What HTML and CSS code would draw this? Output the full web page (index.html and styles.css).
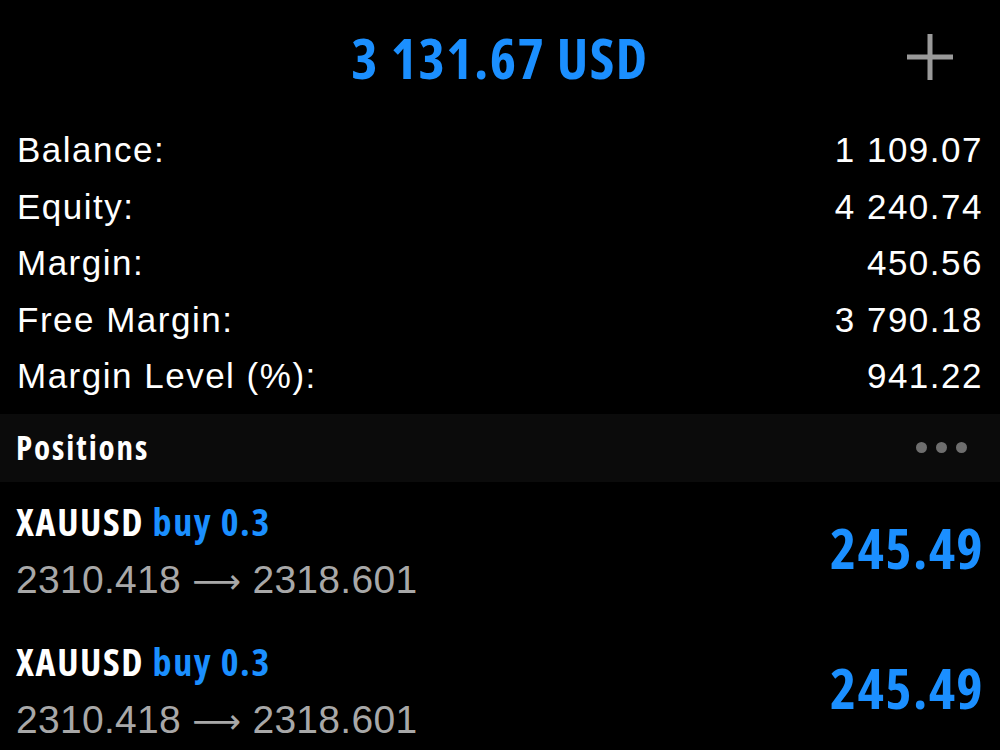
FILE: index.html
```html
<!DOCTYPE html>
<html lang="en">

<head>
  <meta charset="UTF-8">
  <meta name="viewport" content="width=device-width, initial-scale=1.0">
  <title>Trade</title>
  <link rel="stylesheet" href="styles.css">
</head>

<body>
  <div class="screen">
    <!-- Total profit on top, add order button on the right -->
    <header class="top-bar">
      <span></span>
      <h1 class="total">3 131.67 USD</h1>
      <button class="add-btn" type="button" aria-label="New order">
        <svg width="46" height="46" viewBox="0 0 46 46">
          <path d="M23 0V46M0 23H46" stroke="#9a9a9a" stroke-width="5" fill="none" />
        </svg>
      </button>
    </header>

    <!-- Account summary -->
    <div class="summary">
      <div class="summary-row"><span>Balance:</span><span>1 109.07</span></div>
      <div class="summary-row"><span>Equity:</span><span>4 240.74</span></div>
      <div class="summary-row"><span>Margin:</span><span>450.56</span></div>
      <div class="summary-row"><span>Free Margin:</span><span>3 790.18</span></div>
      <div class="summary-row"><span>Margin Level (%):</span><span>941.22</span></div>
    </div>

    <div class="section-head">
      <h2>Positions</h2>
      <div class="more">
        <i></i><i></i><i></i>
      </div>
    </div>

    <!-- Open positions -->
    <div class="positions">
      <div class="position">
        <div class="position-info">
          <div class="symbol">XAUUSD <span class="side">buy 0.3</span></div>
          <div class="prices">2310.418 <span class="arrow">⟶</span> 2318.601</div>
        </div>
        <div class="profit">245.49</div>
      </div>
      <div class="position">
        <div class="position-info">
          <div class="symbol">XAUUSD <span class="side">buy 0.3</span></div>
          <div class="prices">2310.418 <span class="arrow">⟶</span> 2318.601</div>
        </div>
        <div class="profit">245.49</div>
      </div>
    </div>
  </div>
</body>

</html>
```

FILE: styles.css
```css
* {
  box-sizing: border-box;
}

body {
  margin: 0;
  background: #000;
  color: #fff;
  font-family: 'Liberation Sans', Arial, sans-serif;
}

.screen {
  height: 750px;
  overflow: hidden;
}

/* condensed bold face for headings and amounts */
.total,
.section-head h2,
.symbol,
.profit {
  font-family: 'Open Sans', sans-serif;
  font-stretch: condensed;
  font-weight: bold;
}

.top-bar {
  height: 122px;
  display: grid;
  grid-template-columns: 1fr auto 1fr;
  align-items: center;
  padding-bottom: 8px;
}

.total {
  margin: 0;
  font-size: 56px;
  letter-spacing: 1.5px;
  line-height: 1;
  color: #1b8fff;
}

.add-btn {
  justify-self: end;
  margin-right: 47px;
  padding: 0;
  border: 0;
  background: none;
  display: flex;
}

.summary {
  padding: 0 17px 0 17px;
}

.summary-row {
  display: flex;
  justify-content: space-between;
  height: 56.5px;
  line-height: 56.5px;
  font-size: 35px;
  letter-spacing: 1.5px;
}

.section-head {
  margin-top: 9px;
  height: 68px;
  padding: 0 18px 0 16px;
  background: #0b0b0b;
  display: flex;
  align-items: center;
  justify-content: space-between;
}

.section-head h2 {
  margin: 0;
  font-size: 33px;
  letter-spacing: 1.9px;
}

.more {
  display: flex;
  gap: 9px;
  margin-right: 15px;
}

.more i {
  width: 11px;
  height: 11px;
  border-radius: 50%;
  background: #6e6e6e;
}

.position {
  height: 140px;
  padding: 11px 16px 12px 16px;
  display: flex;
  align-items: center;
  justify-content: space-between;
}

.symbol {
  line-height: 58px;
  font-size: 38px;
  letter-spacing: 1.6px;
}

.side {
  color: #1b8fff;
}

.prices {
  line-height: 59px;
  font-size: 39px;
  letter-spacing: .3px;
  color: #a8a8a8;
}

.arrow {
  font-family: 'DejaVu Sans', sans-serif;
  font-size: 34px;
}

.profit {
  margin-bottom: 8px;
  font-size: 56px;
  letter-spacing: 1.4px;
  color: #1b8fff;
}
```
